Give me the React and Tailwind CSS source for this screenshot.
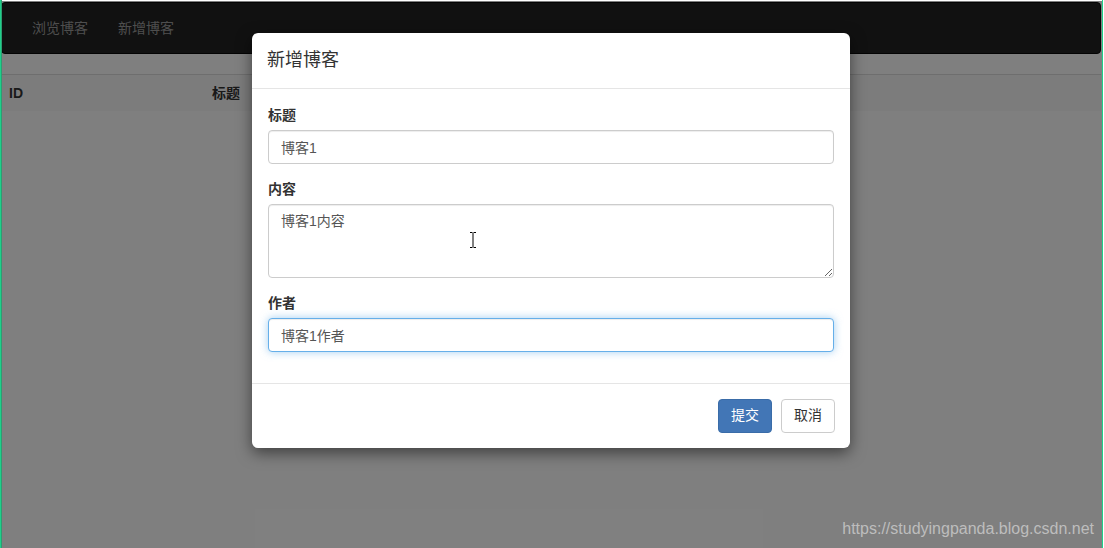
const font = { fontFamily: '"Liberation Sans", "Noto Sans CJK SC", sans-serif' };

function Field({ label, children }) {
  return (
    <div className="mb-[15px]">
      <label className="block mb-[5px] text-[14px] leading-[20px] font-bold text-[#333]">{label}</label>
      {children}
    </div>
  );
}

export default function App() {
  return (
    <div
      className="relative w-[1104px] h-[548px] overflow-hidden bg-white pl-[1px] pr-[3px] pt-[2px] text-[14px] text-[#333]"
      style={font}
    >
      <nav className="flex items-center h-[52px] bg-[#222] border border-[#080808] rounded-[4px] pl-[15px]">
        <a className="px-[15px] text-[#9d9d9d]">浏览博客</a>
        <a className="px-[15px] text-[#9d9d9d]">新增博客</a>
      </nav>

      <div className="mt-[20px] border-t border-[#ddd]">
        <div className="flex h-[36px] items-center bg-[#f9f9f9] font-bold">
          <div className="w-[211px] pl-[8px]">ID</div>
          <div>标题</div>
        </div>
      </div>

      {/* backdrop */}
      <div className="absolute left-[1px] top-[1px] right-[2px] bottom-0 bg-black/50" />
      <div className="absolute inset-y-0 left-0 w-[2px] bg-[#1fd08a] border-r border-[#2c9e72]" />
      <div className="absolute inset-y-0 right-[1px] w-[1px] bg-[#1fd08a]" />

      <div className="absolute left-[252px] top-[33px] w-[598px] h-[415px] flex flex-col bg-white rounded-[6px] shadow-[0_5px_15px_rgba(0,0,0,0.5)]">
        <div className="h-[56px] flex items-center px-[15px] border-b border-[#e5e5e5] text-[18px] text-[#333]">新增博客</div>

        <div className="flex-1 px-[16px] pt-[16px]">
          <Field label="标题">
            <input
              readOnly
              value="博客1"
              className="block w-full h-[34px] px-[12px] bg-white border border-[#ccc] rounded-[4px] text-[#555] outline-none shadow-[inset_0_1px_1px_rgba(0,0,0,0.075)]"
            />
          </Field>
          <Field label="内容">
            <textarea
              readOnly
              value="博客1内容"
              className="block w-full h-[74px] px-[12px] py-[6px] bg-white border border-[#ccc] rounded-[4px] text-[#555] outline-none shadow-[inset_0_1px_1px_rgba(0,0,0,0.075)]"
            />
          </Field>
          <Field label="作者">
            <input
              readOnly
              value="博客1作者"
              className="block w-full h-[34px] px-[12px] bg-white border border-[#66afe9] rounded-[4px] text-[#555] outline-none shadow-[inset_0_1px_1px_rgba(0,0,0,0.075),0_0_8px_rgba(102,175,233,0.6)]"
            />
          </Field>
        </div>

        <div className="h-[65px] flex items-center justify-end gap-[9px] pr-[15px] pb-[1px] border-t border-[#e5e5e5]">
          <button className="w-[54px] h-[34px] bg-[#4276b6] border border-[#3a6ca8] rounded-[4px] text-white">提交</button>
          <button className="w-[54px] h-[34px] bg-white border border-[#ccc] rounded-[4px] text-[#333]">取消</button>
        </div>
      </div>

      {/* text cursor over the textarea */}
      <svg className="absolute left-[469px] top-[232px]" width="8" height="16" viewBox="0 0 8 16" fill="none" stroke="#000" strokeWidth="1">
        <path d="M1 .5h2.5M4.5 .5H7M4 1v14M1 15.5h2.5M4.5 15.5H7" />
      </svg>

      <div className="absolute right-[10px] bottom-[10px] text-[16px] leading-[18px] text-[#bdbdbd]">https://studyingpanda.blog.csdn.net</div>
    </div>
  );
}
